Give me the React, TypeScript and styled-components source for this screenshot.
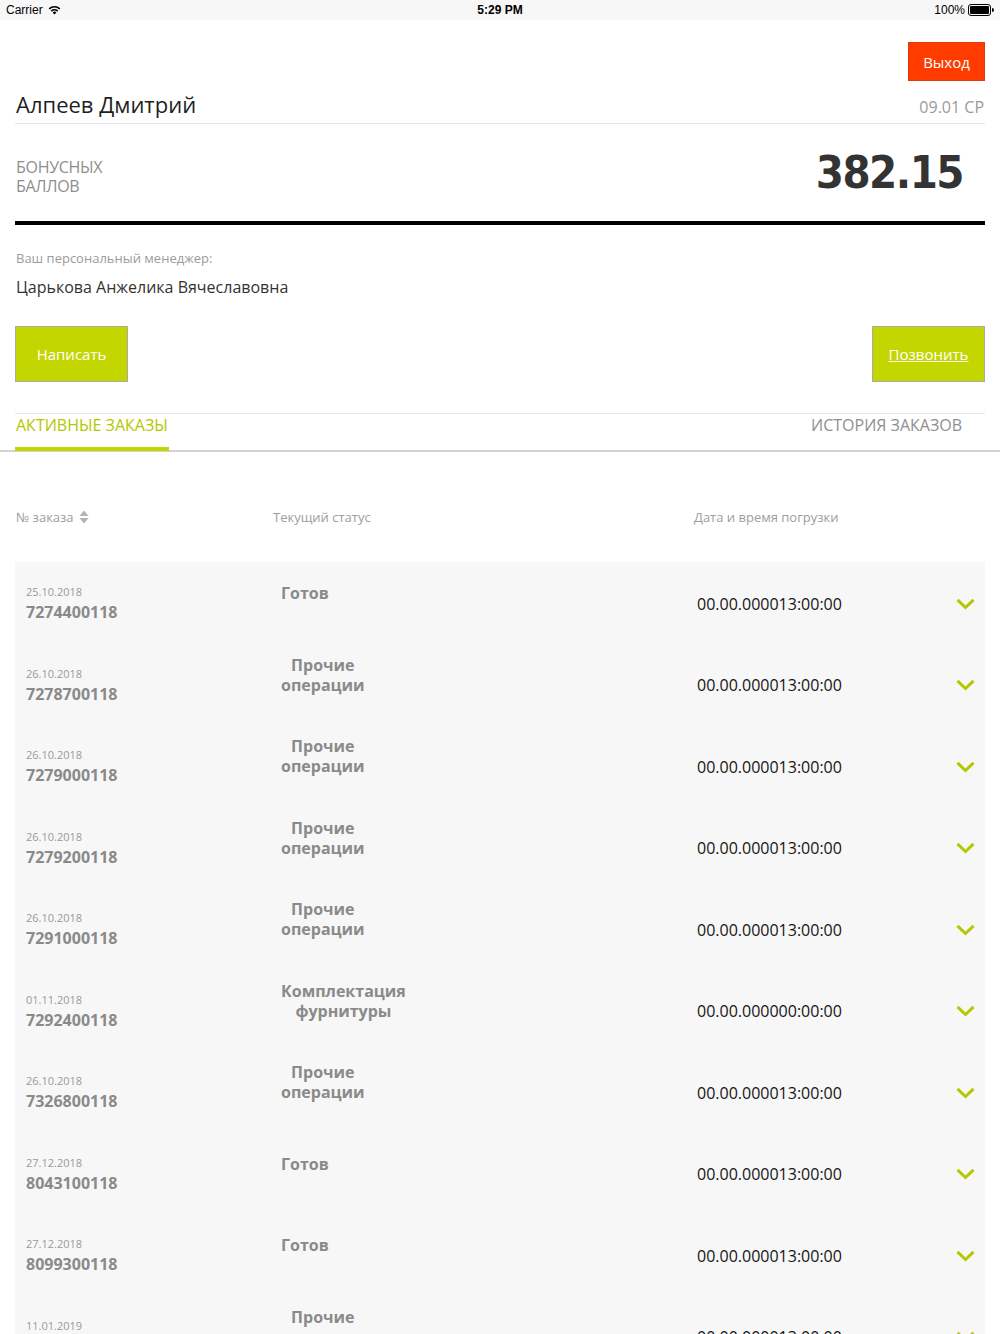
import React from "react";
import styled, { createGlobalStyle } from "styled-components";

const Global = createGlobalStyle`
  html, body { margin: 0; padding: 0; background: #ffffff; }
  body { font-family: "Open Sans", "Noto Sans", sans-serif; -webkit-font-smoothing: antialiased; }
  * { box-sizing: border-box; }
`;

const Page = styled.div`
  width: 1000px;
  min-height: 1334px;
  background: #fff;
`;

const StatusBar = styled.div`
  height: 20px;
  background: #f7f7f7;
  display: grid;
  grid-template-columns: 1fr auto 1fr;
  align-items: center;
  padding: 0 6px;
  font-family: "Liberation Sans", Roboto, sans-serif;
  font-size: 12px;
  color: #000;
`;

const SBLeft = styled.div`
  display: flex;
  align-items: center;
  gap: 5px;
`;

const SBCenter = styled.div`
  font-weight: 700;
  font-size: 12px;
`;

const SBRight = styled.div`
  display: flex;
  align-items: center;
  justify-content: flex-end;
  gap: 3px;
`;

const Section = styled.div`
  padding: 0 15px;
`;

const TopRow = styled.div`
  display: flex;
  justify-content: flex-end;
  padding-top: 22px;
`;

const ExitButton = styled.button`
  width: 77px;
  height: 39px;
  background: #ff3b00;
  border: 1px solid #e03a10;
  color: #fff;
  font-family: "Open Sans", sans-serif;
  font-size: 15px;
  padding: 0;
`;

const NameRow = styled.div`
  display: flex;
  justify-content: space-between;
  align-items: baseline;
  margin-top: 8px;
  padding-bottom: 4px;
  border-bottom: 1px solid #e4e6e6;
`;

const UserName = styled.div`
  font-size: 22px;
  line-height: 30px;
  color: #1f1f1f;
  padding-left: 1px;
`;

const DayLabel = styled.div`
  font-size: 16px;
  color: #9a9a9a;
  padding-right: 1px;
`;

const BonusRow = styled.div`
  height: 101px;
  display: flex;
  align-items: center;
  justify-content: space-between;
  border-bottom: 4px solid #000;
`;

const BonusLabel = styled.div`
  display: flex;
  flex-direction: column;
  padding-left: 1px;
  padding-top: 8px;
`;

const BonusLabelLine = styled.span`
  display: block;
  font-size: 16px;
  line-height: 19px;
  height: 19px;
  color: #8e8e8e;
  text-transform: uppercase;
  letter-spacing: -0.3px;
`;

const BonusValue = styled.div`
  font-family: "DejaVu Sans Condensed", "DejaVu Sans", sans-serif;
  font-stretch: condensed;
  font-weight: 700;
  font-size: 45px;
  color: #333;
  padding-right: 22px;
  letter-spacing: -1.5px;
`;

const ManagerLabel = styled.div`
  margin-top: 24px;
  font-size: 13px;
  line-height: 18px;
  color: #9c9c9c;
  padding-left: 1px;
`;

const ManagerName = styled.div`
  margin-top: 9px;
  font-size: 16px;
  line-height: 22px;
  color: #333;
  padding-left: 1px;
`;

const ButtonRow = styled.div`
  display: flex;
  justify-content: space-between;
  margin-top: 28px;
`;

const GreenButton = styled.button<{ $underline?: boolean }>`
  width: 113px;
  height: 56px;
  background: #c4d600;
  border: 1px solid #a9a9a9;
  color: #fff;
  font-family: "Open Sans", sans-serif;
  font-size: 15px;
  padding: 0;
  text-decoration: ${(p) => (p.$underline ? "underline" : "none")};
`;

const TabsWrap = styled.div`
  margin-top: 31px;
  border-bottom: 2px solid #d3d3d3;
`;

const Tabs = styled.div`
  margin: 0 15px;
  border-top: 1px solid #e8e8e8;
  display: flex;
  justify-content: space-between;
  align-items: flex-start;
  padding-right: 22px;
`;

const Tab = styled.div<{ $active?: boolean }>`
  font-size: 16px;
  line-height: 22px;
  text-transform: uppercase;
  color: ${(p) => (p.$active ? "#b3c800" : "#8f8f8f")};
  padding: 0 1px 11px 1px;
  border-bottom: 4px solid ${(p) => (p.$active ? "#c4d600" : "transparent")};
  margin-bottom: -1px;
`;

const HeaderRow = styled.div`
  display: grid;
  grid-template-columns: 257px 421px 1fr;
  padding: 56px 16px 36px 16px;
  font-size: 13px;
  line-height: 18px;
  color: #9d9d9d;
`;

const HeaderCell = styled.div`
  display: flex;
  align-items: center;
  gap: 5px;
`;

const Rows = styled.div`
  margin: 0 15px;
  background: #f7f7f7;
`;

const Row = styled.div`
  height: 81.5px;
  display: grid;
  grid-template-columns: 255px 416px 1fr 40px;
  padding-left: 11px;
  align-items: center;
`;

const OrderCell = styled.div`
  display: flex;
  flex-direction: column;
  padding-top: 2px;
`;

const OrderDate = styled.div`
  font-size: 11px;
  line-height: 17px;
  color: #9a9a9a;
`;

const OrderNumber = styled.div`
  font-size: 16px;
  font-weight: 700;
  line-height: 24px;
  color: #8a8a8a;
`;

const StatusCell = styled.div`
  align-self: start;
  height: 62px;
  display: flex;
  align-items: center;
`;

const StatusText = styled.div`
  font-size: 16px;
  font-weight: 700;
  line-height: 20px;
  color: #8a8a8a;
  text-align: center;
  white-space: pre-line;
`;

const DateTime = styled.div`
  font-size: 16px;
  color: #151515;
  padding-top: 2px;
`;

const ChevronCell = styled.div`
  display: flex;
  align-items: center;
  justify-content: flex-end;
  padding-top: 2px;
  padding-right: 10px;
`;

const orders = [
  { date: "25.10.2018", num: "7274400118", status: "Готов", dt: "00.00.000013:00:00" },
  { date: "26.10.2018", num: "7278700118", status: "Прочие\nоперации", dt: "00.00.000013:00:00" },
  { date: "26.10.2018", num: "7279000118", status: "Прочие\nоперации", dt: "00.00.000013:00:00" },
  { date: "26.10.2018", num: "7279200118", status: "Прочие\nоперации", dt: "00.00.000013:00:00" },
  { date: "26.10.2018", num: "7291000118", status: "Прочие\nоперации", dt: "00.00.000013:00:00" },
  { date: "01.11.2018", num: "7292400118", status: "Комплектация\nфурнитуры", dt: "00.00.000000:00:00" },
  { date: "26.10.2018", num: "7326800118", status: "Прочие\nоперации", dt: "00.00.000013:00:00" },
  { date: "27.12.2018", num: "8043100118", status: "Готов", dt: "00.00.000013:00:00" },
  { date: "27.12.2018", num: "8099300118", status: "Готов", dt: "00.00.000013:00:00" },
  { date: "11.01.2019", num: "8100000119", status: "Прочие\nоперации", dt: "00.00.000013:00:00" },
];

const Wifi = () => (
  <svg width="13" height="10" viewBox="0 0 13 10">
    <path d="M6.5 9.5 L4.6 7.4 A2.8 2.8 0 0 1 8.4 7.4 Z" fill="#000" />
    <path d="M3.3 6.1 A4.7 4.7 0 0 1 9.7 6.1" stroke="#000" strokeWidth="1.5" fill="none" />
    <path d="M1.2 3.9 A7.6 7.6 0 0 1 11.8 3.9" stroke="#000" strokeWidth="1.5" fill="none" />
  </svg>
);

const Battery = () => (
  <svg width="26" height="12" viewBox="0 0 26 12">
    <rect x="0.5" y="0.5" width="22" height="11" rx="2.5" fill="none" stroke="#000" />
    <rect x="2" y="2" width="19" height="8" rx="1" fill="#000" />
    <path d="M24 4 v4 a1.5 1.5 0 0 0 0 -4z" fill="#000" />
  </svg>
);

const SortIcon = () => (
  <svg width="10" height="14" viewBox="0 0 10 14">
    <path d="M5 0.5 L9.5 6 H0.5 Z" fill="#b3b3b3" />
    <path d="M5 13.5 L9.5 8 H0.5 Z" fill="#b3b3b3" />
  </svg>
);

const Chevron = () => (
  <svg width="19" height="12" viewBox="0 0 19 12">
    <path d="M1.5 1.8 L9.5 9.5 L17.5 1.8" stroke="#b4c800" strokeWidth="3" fill="none" />
  </svg>
);

export default function App() {
  return (
    <Page>
      <Global />
      <StatusBar>
        <SBLeft>
          <span>Carrier</span>
          <Wifi />
        </SBLeft>
        <SBCenter>5:29 PM</SBCenter>
        <SBRight>
          <span>100%</span>
          <Battery />
        </SBRight>
      </StatusBar>
      <Section>
        <TopRow>
          <ExitButton>Выход</ExitButton>
        </TopRow>
        <NameRow>
          <UserName>Алпеев Дмитрий</UserName>
          <DayLabel>09.01 СР</DayLabel>
        </NameRow>
        <BonusRow>
          <BonusLabel>
            <BonusLabelLine>Бонусных</BonusLabelLine>
            <BonusLabelLine>баллов</BonusLabelLine>
          </BonusLabel>
          <BonusValue>382.15</BonusValue>
        </BonusRow>
        <ManagerLabel>Ваш персональный менеджер:</ManagerLabel>
        <ManagerName>Царькова Анжелика Вячеславовна</ManagerName>
        <ButtonRow>
          <GreenButton>Написать</GreenButton>
          <GreenButton $underline>Позвонить</GreenButton>
        </ButtonRow>
      </Section>
      <TabsWrap>
        <Tabs>
          <Tab $active>Активные заказы</Tab>
          <Tab>История заказов</Tab>
        </Tabs>
      </TabsWrap>
      <HeaderRow>
        <HeaderCell>
          № заказа <SortIcon />
        </HeaderCell>
        <HeaderCell>Текущий статус</HeaderCell>
        <HeaderCell>Дата и время погрузки</HeaderCell>
      </HeaderRow>
      <Rows>
        {orders.map((o, i) => (
          <Row key={i}>
            <OrderCell>
              <OrderDate>{o.date}</OrderDate>
              <OrderNumber>{o.num}</OrderNumber>
            </OrderCell>
            <StatusCell>
              <StatusText>{o.status}</StatusText>
            </StatusCell>
            <DateTime>{o.dt}</DateTime>
            <ChevronCell>
              <Chevron />
            </ChevronCell>
          </Row>
        ))}
      </Rows>
    </Page>
  );
}
